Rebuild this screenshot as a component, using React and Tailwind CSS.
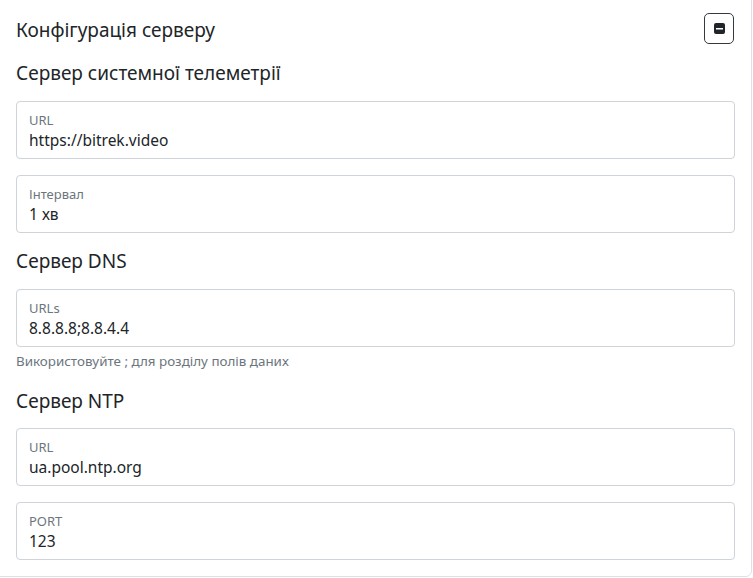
export default function App() {
  const Field = ({ label, value }) => (
    <div className="rounded-[4px] border border-[#ced4da] bg-white px-3 pt-[9px] pb-[7px] h-[58px]">
      <div className="text-[13px] leading-[18px] text-[#6c757d]">{label}</div>
      <div className="text-[15.5px] leading-[22px] text-[#212529]">{value}</div>
    </div>
  );

  return (
    <div className="w-[753px] h-[578px] bg-white overflow-hidden" style={{ fontFamily: '"Noto Sans", sans-serif' }}>
      <div className="-mt-px -ml-px w-[753px] h-[578px] rounded-br-[6px] border border-[#dee2e6] bg-white px-4 pt-[14px]">
        {/* Header */}
        <div className="flex items-center justify-between">
          <h1 className="text-[19px] leading-[32px] text-[#212529]">Конфігурація серверу</h1>
          <button className="w-[30px] h-[31px] -mt-[4px] mr-px rounded-[5px] border border-[#343a40] flex items-center justify-center">
            <svg width="11" height="11" viewBox="0 0 11 11">
              <rect x="0" y="0" width="11" height="11" rx="2" fill="#212529" />
              <rect x="2" y="5" width="7" height="1.5" fill="#fff" />
            </svg>
          </button>
        </div>

        <h2 className="mt-[15px] text-[19px] leading-[24px] text-[#212529]">Сервер системної телеметрії</h2>
        <div className="mt-[16px] space-y-[16px]">
          <Field label="URL" value="https://bitrek.video" />
          <Field label="Інтервал" value="1 хв" />
        </div>

        <h2 className="mt-[16px] text-[19px] leading-[24px] text-[#212529]">Сервер DNS</h2>
        <div className="mt-[16px]">
          <Field label="URLs" value="8.8.8.8;8.8.4.4" />
          <div className="mt-[5px] text-[13.4px] leading-[18px] text-[#6c757d]">Використовуйте ; для розділу полів даних</div>
        </div>

        <h2 className="mt-[19px] text-[19px] leading-[24px] text-[#212529]">Сервер NTP</h2>
        <div className="mt-[15px] space-y-[16px]">
          <Field label="URL" value="ua.pool.ntp.org" />
          <Field label="PORT" value="123" />
        </div>
      </div>
    </div>
  );
}
